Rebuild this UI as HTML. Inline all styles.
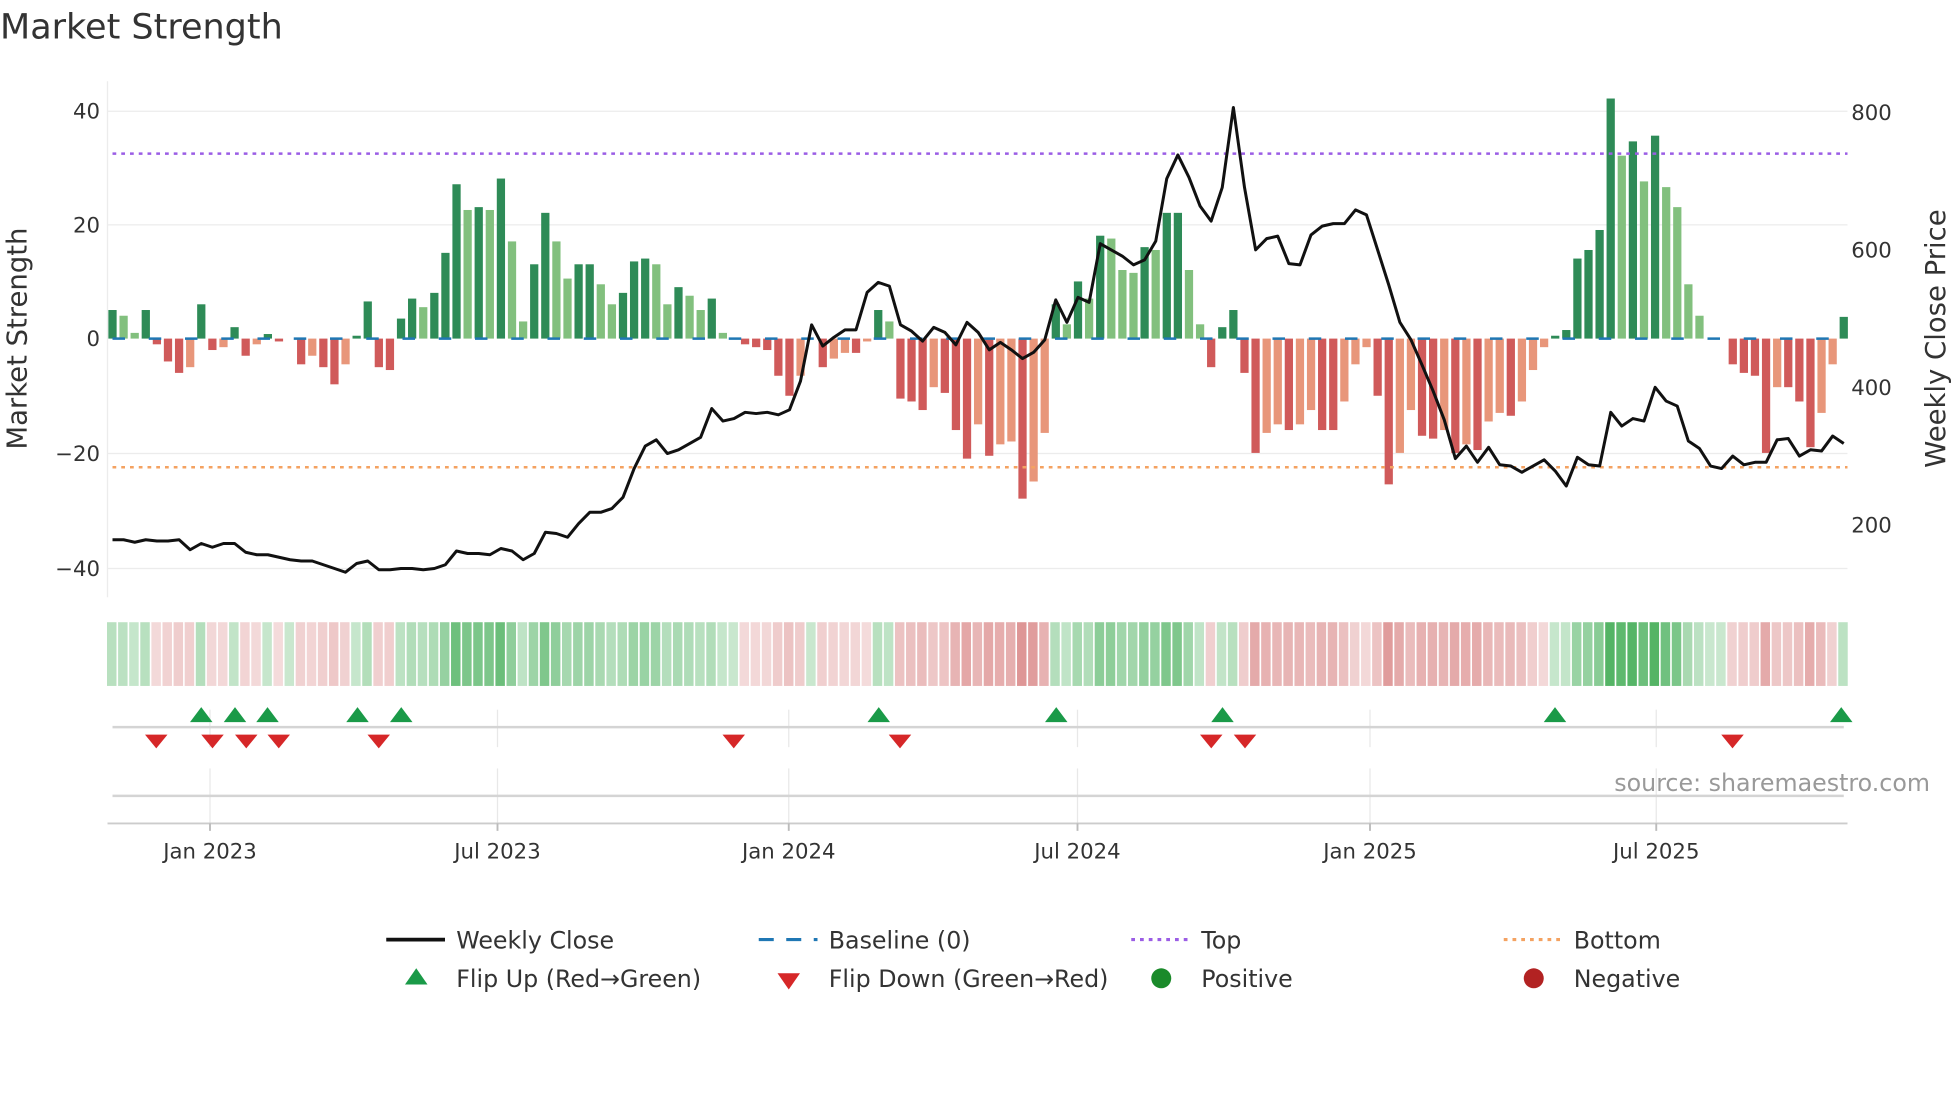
<!DOCTYPE html>
<html><head><meta charset="utf-8"><style>
html,body{margin:0;padding:0;background:#fff;width:1960px;height:1102px;overflow:hidden}
svg{display:block}
text{font-family:"DejaVu Sans","Liberation Sans",sans-serif;fill:#333}
</style></head><body>
<svg id="s" width="1960" height="1102" viewBox="0 0 1568 882" preserveAspectRatio="none" xmlns="http://www.w3.org/2000/svg">
<text x="0" y="31" font-size="28" fill="#333">Market Strength</text>
<g stroke="#ececec" stroke-width="1">
<line x1="86" y1="89" x2="1478" y2="89"/><line x1="86" y1="180" x2="1478" y2="180"/>
<line x1="86" y1="363" x2="1478" y2="363"/><line x1="86" y1="455" x2="1478" y2="455"/>
<line x1="86" y1="65" x2="86" y2="478"/>
</g>
<g font-size="17" text-anchor="end">
<text x="80" y="95">40</text><text x="80" y="186">20</text><text x="80" y="277">0</text>
<text x="80" y="369">−20</text><text x="80" y="461">−40</text>
</g>
<g font-size="17">
<text x="1481" y="96">800</text><text x="1481" y="206">600</text><text x="1481" y="316">400</text><text x="1481" y="426">200</text>
</g>
<text transform="translate(21,271) rotate(-90)" font-size="22" text-anchor="middle">Market Strength</text>
<text transform="translate(1556,271) rotate(-90)" font-size="22" text-anchor="middle">Weekly Close Price</text>
<g id="bars"></g>
<line x1="90" y1="271" x2="1478" y2="271" stroke="#1f77b4" stroke-width="2" stroke-dasharray="10,19"/>
<line x1="90" y1="123" x2="1478" y2="123" stroke="#9b5de5" stroke-width="2" stroke-dasharray="3,4"/>
<line x1="90" y1="374" x2="1478" y2="374" stroke="#f4a261" stroke-width="2" stroke-dasharray="3,4"/>
<polyline id="pl" fill="none" stroke="#111" stroke-width="2.4" stroke-linejoin="round"/>
<g id="heat"></g>
<g stroke="#e8e8e8" stroke-width="1">
<line x1="168" y1="568" x2="168" y2="598"/><line x1="398" y1="568" x2="398" y2="598"/><line x1="631" y1="568" x2="631" y2="598"/><line x1="862" y1="568" x2="862" y2="598"/><line x1="1096" y1="568" x2="1096" y2="598"/><line x1="1325" y1="568" x2="1325" y2="598"/>
<line x1="168" y1="615" x2="168" y2="659"/><line x1="398" y1="615" x2="398" y2="659"/><line x1="631" y1="615" x2="631" y2="659"/><line x1="862" y1="615" x2="862" y2="659"/><line x1="1096" y1="615" x2="1096" y2="659"/><line x1="1325" y1="615" x2="1325" y2="659"/>
</g>
<line x1="90" y1="582" x2="1475" y2="582" stroke="#d4d4d4" stroke-width="2"/>
<line x1="90" y1="637" x2="1475" y2="637" stroke="#d4d4d4" stroke-width="2"/>
<line x1="86" y1="659" x2="1478" y2="659" stroke="#ccc" stroke-width="1.5"/>
<g stroke="#bbb" stroke-width="1.5">
<line x1="168" y1="659" x2="168" y2="665"/><line x1="398" y1="659" x2="398" y2="665"/><line x1="631" y1="659" x2="631" y2="665"/><line x1="862" y1="659" x2="862" y2="665"/><line x1="1096" y1="659" x2="1096" y2="665"/><line x1="1325" y1="659" x2="1325" y2="665"/>
</g>
<g id="mk"></g>
<text x="1544" y="633" font-size="19" text-anchor="end" style="fill:#999">source: sharemaestro.com</text>
<g font-size="17" text-anchor="middle">
<text x="168" y="687">Jan 2023</text><text x="398" y="687">Jul 2023</text><text x="631" y="687">Jan 2024</text><text x="862" y="687">Jul 2024</text><text x="1096" y="687">Jan 2025</text><text x="1325" y="687">Jul 2025</text>
</g>
<g font-size="19">
<line x1="309" y1="752" x2="356" y2="752" stroke="#111" stroke-width="3"/><text x="365" y="759">Weekly Close</text>
<line x1="607" y1="752" x2="654" y2="752" stroke="#1f77b4" stroke-width="2.5" stroke-dasharray="12,10"/><text x="663" y="759">Baseline (0)</text>
<line x1="905" y1="752" x2="952" y2="752" stroke="#9b5de5" stroke-width="2.5" stroke-dasharray="3,4"/><text x="961" y="759">Top</text>
<line x1="1203" y1="752" x2="1250" y2="752" stroke="#f4a261" stroke-width="2.5" stroke-dasharray="3,4"/><text x="1259" y="759">Bottom</text>
<polygon points="324,788 342,788 333,775" fill="#1a9a48"/><text x="365" y="790">Flip Up (Red→Green)</text>
<polygon points="622,779 640,779 631,792" fill="#d62728"/><text x="663" y="790">Flip Down (Green→Red)</text>
<circle cx="929" cy="783" r="8" fill="#1a8a2a"/><text x="961" y="790">Positive</text>
<circle cx="1227" cy="783" r="8" fill="#b22222"/><text x="1259" y="790">Negative</text>
</g>
</svg>
<script>
var V=[5,4,1,5,-1,-4,-6,-5,6,-2,-1.5,2,-3,-1,0.8,-0.5,0,-4.5,-3,-5,-8,-4.5,0.5,6.5,-5,-5.5,3.5,7,5.5,8,15,27,22.5,23,22.5,28,17,3,13,22,17,10.5,13,13,9.5,6,8,13.5,14,13,6,9,7.5,5,7,1,0,-1,-1.5,-2,-6.5,-10,-6.5,0,-5,-3.5,-2.5,-2.5,-0.5,5,3,-10.5,-11,-12.5,-8.5,-9.5,-16,-21,-15,-20.5,-18.5,-18,-28,-25,-16.5,6,2.5,10,7,18,17.5,12,11.5,16,15.5,22,22,12,2.5,-5,2,5,-6,-20,-16.5,-15,-16,-15,-12.5,-16,-16,-11,-4.5,-1.5,-10,-25.5,-20,-12.5,-17,-17.5,-16,-20,-18.5,-19.5,-14.5,-13,-13.5,-11,-5.5,-1.5,0.5,1.5,14,15.5,19,42,32,34.5,27.5,35.5,26.5,23,9.5,4,0,0,-4.5,-6,-6.5,-20,-8.5,-8.5,-11,-19,-13,-4.5,3.8];
var P=[432,432,434,432,433,433,432,440,435,438,435,435,442,444,444,446,448,449,449,452,455,458,451,449,456,456,455,455,456,455,452,441,443,443,444,439,441,448,443,426,427,430,419,410,410,407,398,375,357,352,363,360,355,350,327,337,335,330,331,330,332,328,305,260,277,270,264,264,234,226,229,260,265,273,262,266,276,258,266,280,274,280,287,282,272,240,258,238,242,195,200,205,212,208,193,143,124,142,165,177,150,86,150,200,191,189,211,212,188,181,179,179,168,172,200,228,258,272,292,313,336,367,357,370,358,372,373,378,373,368,377,389,366,372,373,330,341,335,337,310,321,325,353,359,373,375,365,372,370,370,352,351,365,360,361,349,355];
var N=V.length,x0=90,dx=(1475-90)/(N-1),ns="http://www.w3.org/2000/svg";
function el(g,t,a){var e=document.createElementNS(ns,t);for(var k in a)e.setAttribute(k,a[k]);document.getElementById(g).appendChild(e);}
for(var i=0;i<N;i++){var v=V[i],p=i?V[i-1]:0,x=x0+i*dx,c,h=Math.abs(v)*4.575;
 if(v>=0)c=(v>=p)?"#2e8b57":"#82c07e";else c=(v<=p)?"#d05a5a":"#e8967a";
 if(h>0.3)el("bars","rect",{x:x-3.3,y:v>=0?271-h:271,width:6.6,height:h,fill:c});
 var m=Math.min(Math.abs(v)/35,1),hc;
 if(v>=0){hc="rgba(60,170,80,"+(0.28+0.6*m)+")";}else{hc="rgba(205,95,95,"+(0.22+0.55*m)+")";}
 el("heat","rect",{x:x-4.4,y:498,width:dx-1.3,height:51,fill:hc});}
var pts=[];for(var i=0;i<P.length;i++)pts.push((x0+i*dx).toFixed(1)+","+P[i]);
document.getElementById("pl").setAttribute("points",pts.join(" "));
[161,188,214,286,321,703,845,978,1244,1473].forEach(function(x){el("mk","polygon",{points:(x-9)+",578 "+(x+9)+",578 "+x+",566",fill:"#1a9a48"});});
[125,170,197,223,303,587,720,969,996,1386].forEach(function(x){el("mk","polygon",{points:(x-9)+",588 "+(x+9)+",588 "+x+",599",fill:"#d62728"});});
</script>
</body></html>
